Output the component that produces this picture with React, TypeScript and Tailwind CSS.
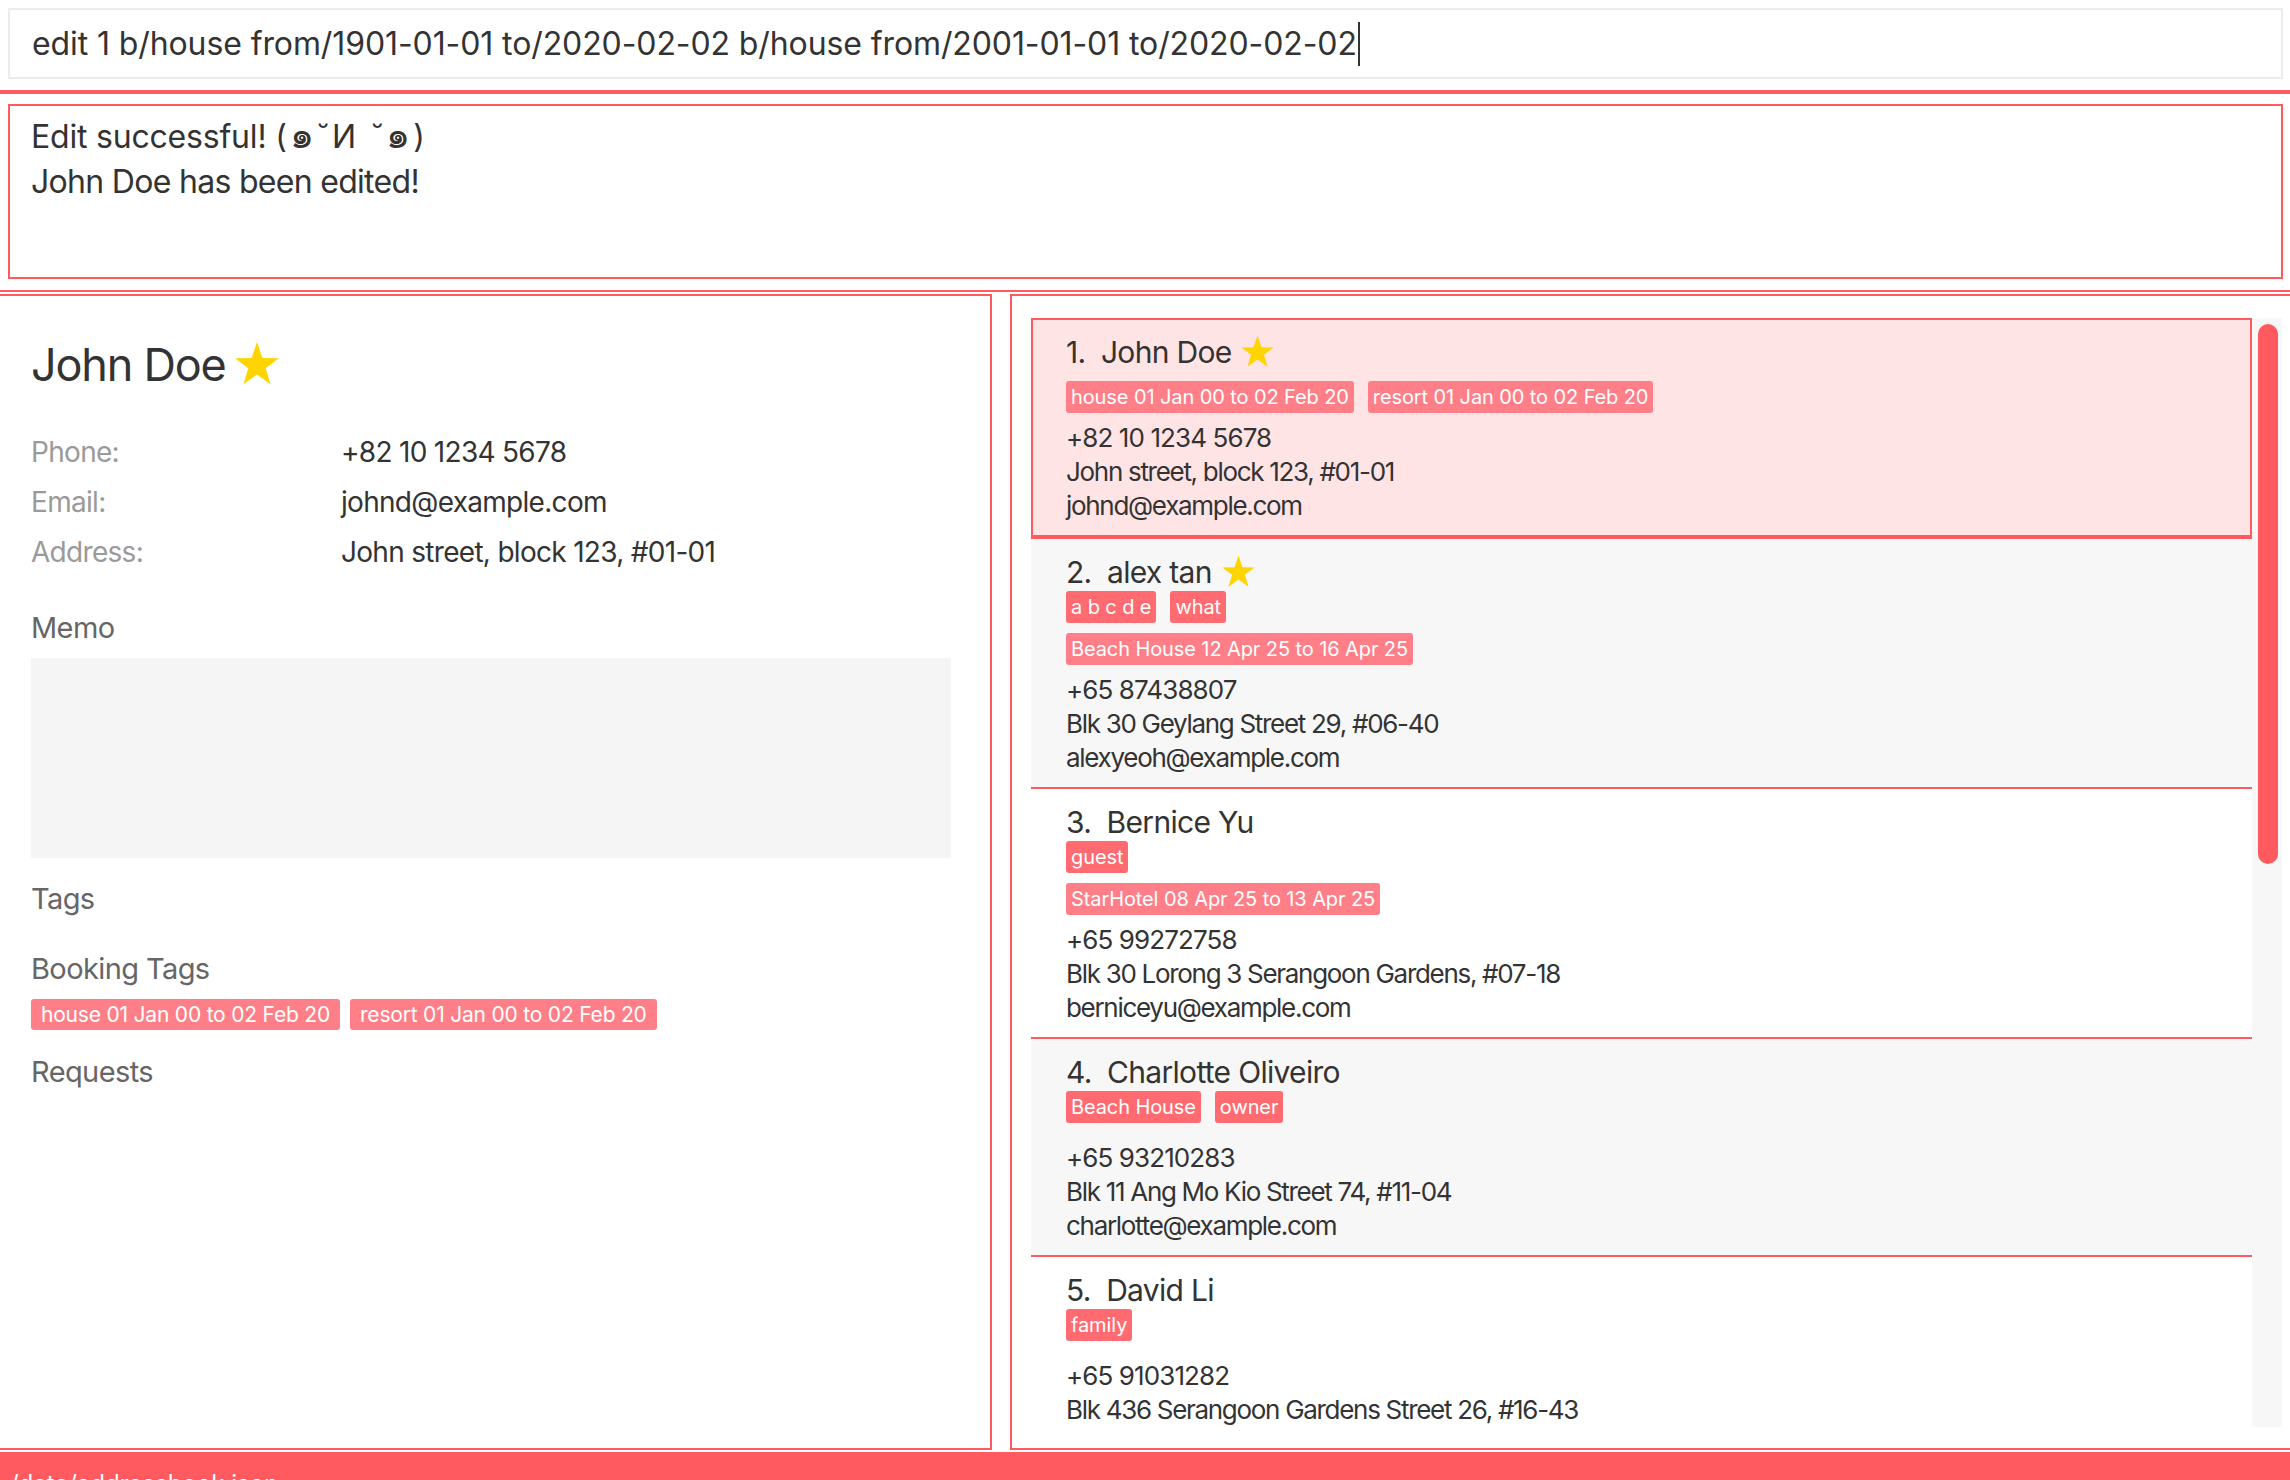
import React from 'react';

const font = { fontFamily: 'Inter, "Noto Sans", "DejaVu Sans", sans-serif' };

type Person = {
  name: string;
  starred?: boolean;
  tags: string[];
  bookings: string[];
  phone: string;
  address: string;
  email: string;
};

const people: Person[] = [
  {
    name: 'John Doe',
    starred: true,
    tags: [],
    bookings: ['house 01 Jan 00 to 02 Feb 20', 'resort 01 Jan 00 to 02 Feb 20'],
    phone: '+82 10 1234 5678',
    address: 'John street, block 123, #01-01',
    email: 'johnd@example.com',
  },
  {
    name: 'alex tan',
    starred: true,
    tags: ['a b c d e', 'what'],
    bookings: ['Beach House 12 Apr 25 to 16 Apr 25'],
    phone: '+65 87438807',
    address: 'Blk 30 Geylang Street 29, #06-40',
    email: 'alexyeoh@example.com',
  },
  {
    name: 'Bernice Yu',
    tags: ['guest'],
    bookings: ['StarHotel 08 Apr 25 to 13 Apr 25'],
    phone: '+65 99272758',
    address: 'Blk 30 Lorong 3 Serangoon Gardens, #07-18',
    email: 'berniceyu@example.com',
  },
  {
    name: 'Charlotte Oliveiro',
    tags: ['Beach House', 'owner'],
    bookings: [],
    phone: '+65 93210283',
    address: 'Blk 11 Ang Mo Kio Street 74, #11-04',
    email: 'charlotte@example.com',
  },
  {
    name: 'David Li',
    tags: ['family'],
    bookings: [],
    phone: '+65 91031282',
    address: 'Blk 436 Serangoon Gardens Street 26, #16-43',
    email: 'lidavid@example.com',
  },
];

function Star({ size }: { size: number }) {
  return (
    <svg width={size} height={size} viewBox="0 0 24 24" className="shrink-0">
      <polygon
        points="12,1 14.6,8.6 22.5,8.7 16.2,13.5 18.5,21.2 12,16.6 5.5,21.2 7.8,13.5 1.5,8.7 9.4,8.6"
        fill="#ffd500"
      />
    </svg>
  );
}

function Chip({ label, booking, big }: { label: string; booking?: boolean; big?: boolean }) {
  return (
    <span
      className={
        (booking ? 'bg-[#ff7f88] ' : 'bg-[#ff6b71] ') +
        (big ? 'h-[31px] px-[10px] text-[21px] leading-[31px] tracking-[-0.2px] ' : 'h-[32px] px-[5px] text-[20px] leading-[32px] tracking-[-0.1px] ') +
        'rounded-[3px] text-white whitespace-nowrap'
      }
    >
      {label}
    </span>
  );
}

function PersonCard({ p, index, selected }: { p: Person; index: number; selected: boolean }) {
  const bg = selected
    ? 'bg-[#ffe4e6] border-2 border-[#ff5a5f] pl-[33px] pt-[14px]'
    : index % 2 === 1
      ? 'bg-[#f7f7f7] pl-[35px] pt-[15px]'
      : 'bg-white pl-[35px] pt-[15px]';
  return (
    <div className="border-b-2 border-[#ff5a5f]">
      <div className={bg + ' pb-[12px] text-[#333]'}>
        <div className="flex h-[36px] items-center gap-[8px] text-[30px] leading-[36px] tracking-[-0.7px]">
          <span className="whitespace-pre">{index + 1}.  {p.name}</span>
          {p.starred && <Star size={37} />}
        </div>
        <div className="mt-[1px] flex gap-[14px]">
          {p.tags.map((t) => (
            <Chip key={t} label={t} />
          ))}
        </div>
        <div className="mt-[10px] flex gap-[14px]">
          {p.bookings.map((t) => (
            <Chip key={t} label={t} booking />
          ))}
        </div>
        <div className="mt-[8px] text-[26px] leading-[34px] tracking-[-1.3px]">
          <div className="tracking-[-0.9px]">{p.phone}</div>
          <div>{p.address}</div>
          <div>{p.email}</div>
        </div>
      </div>
    </div>
  );
}

function Field({ label, value }: { label: string; value: string }) {
  return (
    <div className="flex h-[50px] items-center text-[28px] leading-[50px] tracking-[-0.7px]">
      <span className="w-[310px] text-[#9a9a9a]">{label}</span>
      <span className="text-[#333]">{value}</span>
    </div>
  );
}

export default function App() {
  return (
    <div className="flex h-[1480px] w-[2290px] flex-col overflow-hidden bg-white" style={font}>
      <div className="pl-[8px] pr-[7px] pt-[8px]">
        <div className="flex h-[71px] items-center border-2 border-[#ececec] pl-[22px] text-[32px] tracking-[-0.1px] text-[#333]">
          <span className="whitespace-pre">edit 1 b/house from/1901-01-01 to/2020-02-02 b/house from/2001-01-01 to/2020-02-02</span>
          <span className="ml-[1px] h-[44px] w-[2px] bg-[#333]" />
        </div>
      </div>
      <div className="mt-[11px] h-[4px] bg-[#ff5a5f]" />
      <div className="ml-[8px] mr-[7px] mt-[10px] h-[175px] border-2 border-[#ff5a5f] pl-[21px] pt-[8px] text-[32px] leading-[45px] text-[#333]">
        <div className="tracking-[-0.2px]">
          Edit successful!{' '}
          <span className="tracking-[3px]">
            (<span className="text-[38px] leading-[0]">๑</span>˘И ˘<span className="text-[38px] leading-[0]">๑</span>)
          </span>
        </div>
        <div className="tracking-[-0.7px]">John Doe has been edited!</div>
      </div>
      <div className="mt-[11px] h-[2px] bg-[#ff5a5f]" />

      <div className="mt-[2px] flex h-[1156px] gap-[18px]">
        <div className="w-[992px] border-y-2 border-r-2 border-[#ff5a5f] pl-[31px] pt-[39px]">
          <div className="flex h-[60px] items-center gap-[6px] text-[45px] leading-[60px] tracking-[-1.2px] text-[#333]">
            <span>John Doe</span>
            <Star size={50} />
          </div>
          <div className="mt-[32px]">
            <Field label="Phone:" value="+82 10 1234 5678" />
            <Field label="Email:" value="johnd@example.com" />
            <Field label="Address:" value="John street, block 123, #01-01" />
          </div>
          <div className="mt-[31px] text-[29px] leading-[40px] tracking-[-0.6px] text-[#666]">Memo</div>
          <div className="mt-[10px] h-[200px] w-[920px] bg-[#f5f5f5]" />
          <div className="mt-[21px] text-[29px] leading-[40px] tracking-[-0.6px] text-[#666]">Tags</div>
          <div className="mt-[30px] text-[29px] leading-[40px] tracking-[-0.6px] text-[#666]">Booking Tags</div>
          <div className="mt-[10px] flex gap-[10px]">
            <Chip label="house 01 Jan 00 to 02 Feb 20" booking big />
            <Chip label="resort 01 Jan 00 to 02 Feb 20" booking big />
          </div>
          <div className="mt-[22px] text-[29px] leading-[40px] tracking-[-0.6px] text-[#666]">Requests</div>
        </div>

        <div className="flex flex-1 border-y-2 border-l-2 border-[#ff5a5f] pb-[21px] pl-[19px] pr-[8px] pt-[22px]">
          <div className="flex-1 overflow-hidden bg-[#f7f7f7]">
            {people.map((p, i) => (
              <PersonCard key={p.name} p={p} index={i} selected={i === 0} />
            ))}
          </div>
          <div className="w-[30px] bg-[#f7f7f7] pl-[6px] pt-[6px]">
            <div className="h-[540px] w-[20px] rounded-[10px] bg-[#ff5a5f]" />
          </div>
        </div>
      </div>

      <div className="mt-[2px] h-[28px] overflow-hidden bg-[#ff5a5f] pl-[3px] pt-[17px] text-[24px] leading-[30px] text-white">
        ./data/addressbook.json
      </div>
    </div>
  );
}
